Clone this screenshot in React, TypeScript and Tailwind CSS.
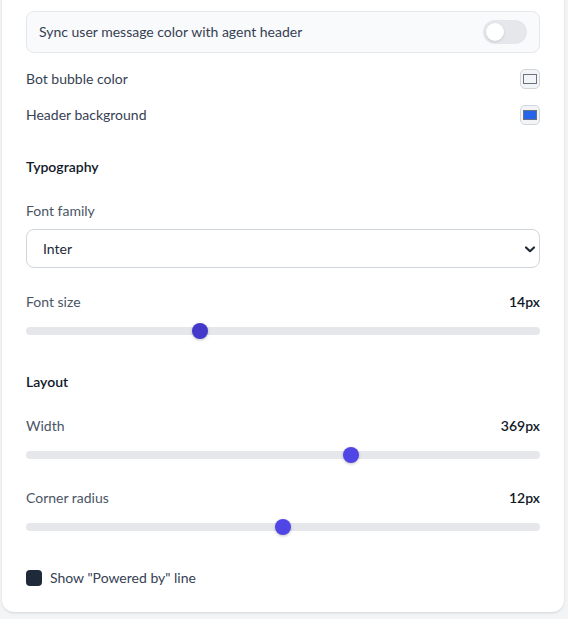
import React, { useState } from 'react';

interface SliderProps {
    label: string;
    value: number;
    min: number;
    max: number;
    unit?: string;
    thumbClass?: string;
}

const Slider: React.FC<SliderProps> = ({ label, value, min, max, unit = 'px', thumbClass = 'bg-[#4f46e5]' }) => {
    const pct = (value - min) / (max - min);

    return (
        <div className="pb-px">
            <div className="flex h-5 items-center justify-between text-sm">
                <span className="text-gray-600">{label}</span>
                <span className="font-semibold text-gray-900">
                    {value}
                    {unit}
                </span>
            </div>
            <div className="relative mt-[11px] flex h-4 items-center">
                <div className="h-2 w-full rounded-full bg-gray-200" />
                {/* thumb travels inside the track, 8px in from each end */}
                <div
                    className={`absolute top-0 h-4 w-4 rounded-full shadow-[0_1px_3px_rgba(0,0,0,0.25)] ${thumbClass}`}
                    style={{ left: `calc(${pct} * (100% - 16px))` }}
                />
            </div>
        </div>
    );
};

const ColorRow: React.FC<{ label: string; swatch: string }> = ({ label, swatch }) => (
    <div className="flex h-5 items-center justify-between">
        <span className="text-sm text-gray-700">{label}</span>
        <div className="flex h-5 w-5 items-center justify-center rounded-[5px] border border-gray-300 bg-gray-100">
            <div className={`h-2.5 w-3.5 border border-gray-500 ${swatch}`} />
        </div>
    </div>
);

const App: React.FC = () => {
    const [sync, setSync] = useState(false);
    const [font, setFont] = useState('Inter');

    return (
        <div className="min-h-[619px] bg-gray-100 pb-2 pl-[2px] pr-[4px] font-['Lato',sans-serif]">
            <div className="-mt-[13px] rounded-xl bg-white px-6 pb-6 pt-6 shadow-sm">
                <div className="flex flex-col gap-8">
                    {/* Colors */}
                    <div className="flex flex-col gap-4">
                        <div className="flex items-center justify-between rounded-lg border border-gray-200 bg-gray-50 px-3 py-2">
                            <span className="text-sm text-gray-700">
                                Sync user message color with agent header
                            </span>
                            <button
                                type="button"
                                onClick={() => setSync(!sync)}
                                className={`relative h-6 w-11 rounded-full ${sync ? 'bg-[#4f46e5]' : 'bg-gray-200'}`}
                            >
                                <span
                                    className={`absolute top-[3px] h-4.5 w-4.5 rounded-full bg-white shadow-sm ${sync ? 'left-[23px]' : 'left-[3px]'}`}
                                />
                            </button>
                        </div>
                        <ColorRow label="Bot bubble color" swatch="bg-[#f3f4f6]" />
                        <ColorRow label="Header background" swatch="bg-[#2563eb]" />
                    </div>

                    {/* Typography */}
                    <div className="flex flex-col gap-6">
                        <h3 className="text-sm font-semibold leading-5 text-gray-900">Typography</h3>
                        <div>
                            <label className="block text-sm leading-5 text-gray-600">Font family</label>
                            <div className="relative mt-2">
                                <select
                                    value={font}
                                    onChange={(e) => setFont(e.target.value)}
                                    className="block h-[39px] w-full appearance-none rounded-lg border border-gray-300 bg-white px-4 text-sm text-gray-800 outline-none"
                                >
                                    <option>Inter</option>
                                    <option>Roboto</option>
                                    <option>Lato</option>
                                    <option>Open Sans</option>
                                </select>
                                <svg
                                    className="pointer-events-none absolute right-[4px] top-1/2 h-3 w-3 -translate-y-1/2 text-gray-800"
                                    viewBox="0 0 12 12"
                                    fill="none"
                                    stroke="currentColor"
                                    strokeWidth="2.2"
                                    strokeLinecap="round"
                                    strokeLinejoin="round"
                                >
                                    <path d="M2 4.5 6 8.2 10 4.5" />
                                </svg>
                            </div>
                        </div>
                        <Slider label="Font size" value={14} min={10} max={22} thumbClass="bg-[#4338ca]" />
                    </div>

                    {/* Layout */}
                    <div className="flex flex-col gap-6">
                        <h3 className="text-sm font-semibold leading-5 text-gray-900">Layout</h3>
                        <Slider label="Width" value={369} min={280} max={420} />
                        <Slider label="Corner radius" value={12} min={0} max={24} />
                    </div>

                    <label className="flex h-5 items-center gap-2 text-sm text-gray-700">
                        <span className="h-4 w-4 rounded-[4px] bg-gray-800" />
                        Show "Powered by" line
                    </label>
                </div>
            </div>
        </div>
    );
};

export default App;
